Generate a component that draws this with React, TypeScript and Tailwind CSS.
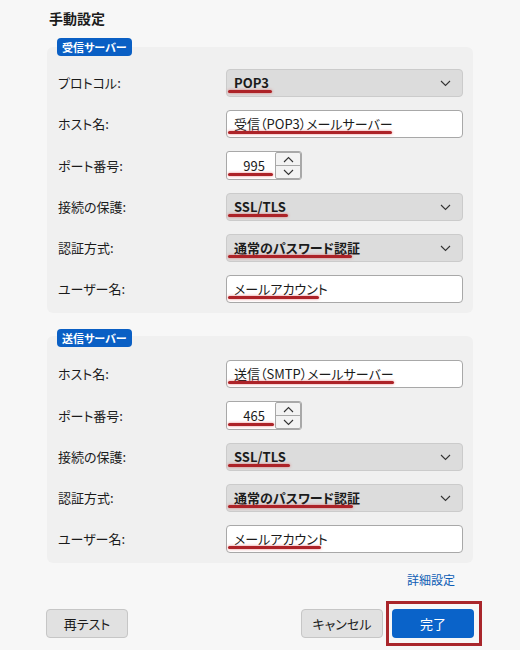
import React from "react";

type Field =
  | { label: string; kind: "select"; value: string; mark: string }
  | { label: string; kind: "input"; value: string; mark: string }
  | { label: string; kind: "spin"; value: string; mark: string };

const incoming: Field[] = [
  { label: "プロトコル:", kind: "select", value: "POP3", mark: "w-[44px]" },
  { label: "ホスト名:", kind: "input", value: "受信（POP3）メールサーバー", mark: "w-[164px]" },
  { label: "ポート番号:", kind: "spin", value: "995", mark: "w-[45px]" },
  { label: "接続の保護:", kind: "select", value: "SSL/TLS", mark: "w-[60px]" },
  { label: "認証方式:", kind: "select", value: "通常のパスワード認証", mark: "w-[124px]" },
  { label: "ユーザー名:", kind: "input", value: "メールアカウント", mark: "w-[91px]" },
];

const outgoing: Field[] = [
  { label: "ホスト名:", kind: "input", value: "送信（SMTP）メールサーバー", mark: "w-[166px]" },
  { label: "ポート番号:", kind: "spin", value: "465", mark: "w-[46px]" },
  { label: "接続の保護:", kind: "select", value: "SSL/TLS", mark: "w-[62px]" },
  { label: "認証方式:", kind: "select", value: "通常のパスワード認証", mark: "w-[125px]" },
  { label: "ユーザー名:", kind: "input", value: "メールアカウント", mark: "w-[93px]" },
];

function Mark({ w }: { w: string }) {
  // red annotation line drawn over the field
  return (
    <span
      className={`absolute left-[1px] bottom-[3px] h-[3px] rounded-full bg-[#ad2328] shadow-[0_0_3px_rgba(220,60,60,0.6)] ${w}`}
    />
  );
}

function Chevron({ up }: { up?: boolean }) {
  return (
    <svg width="11" height="7" viewBox="0 0 11 7" fill="none">
      <path
        d={up ? "M1 6L5.5 1.5L10 6" : "M1 1L5.5 5.5L10 1"}
        stroke="#333"
        strokeWidth="1.1"
      />
    </svg>
  );
}

function Control({ f }: { f: Field }) {
  if (f.kind === "select") {
    return (
      <div className="relative flex h-[28px] w-[237px] items-center justify-between rounded-[4px] border border-[#cbcbcb] bg-[#dcdcdc] pl-[7px] pr-[11px]">
        <span className="text-[13px] font-bold text-[#1b1b1b]">{f.value}</span>
        <Chevron />
        <Mark w={f.mark} />
      </div>
    );
  }
  if (f.kind === "input") {
    return (
      <div className="relative flex h-[28px] w-[237px] items-center rounded-[4px] border border-[#a8a8a8] bg-white pl-[7px]">
        <span className="text-[13px] text-[#1b1b1b]">{f.value}</span>
        <Mark w={f.mark} />
      </div>
    );
  }
  return (
    <div className="relative flex h-[29px] w-[76px] items-center rounded-[3px] border border-[#a8a8a8] bg-white">
      <span className="w-[48px] pr-[10px] text-right text-[13px] text-[#1b1b1b]">{f.value}</span>
      <div className="flex h-[27px] w-[26px] flex-col rounded-[2px] border border-[#a8a8a8] bg-[#f3f3f3]">
        <div className="flex flex-1 items-center justify-center border-b border-[#a8a8a8]">
          <Chevron up />
        </div>
        <div className="flex flex-1 items-center justify-center">
          <Chevron />
        </div>
      </div>
      <Mark w={f.mark} />
    </div>
  );
}

function Section({ title, fields, pt, overlap }: { title: string; fields: Field[]; pt: string; overlap: string }) {
  return (
    <div className="flex flex-col">
      <div className={`relative z-10 ml-[57px] self-start rounded-[4px] bg-[#0a5fc4] px-[5px] text-[11px] font-bold leading-[18px] text-white ${overlap}`}>
        {title}
      </div>
      <div className={`ml-[47px] flex w-[426px] flex-col gap-[13px] rounded-[6px] bg-[#f0f0f0] pb-[10px] pl-[11px] ${pt}`}>
        {fields.map((f, i) => (
          <div key={i} className="flex items-center">
            <span className="w-[168px] text-[13px] text-[#1b1b1b]">{f.label}</span>
            <Control f={f} />
          </div>
        ))}
      </div>
    </div>
  );
}

export default function App() {
  return (
    <div className="h-[650px] w-[520px] overflow-hidden bg-[#f7f7f7] pt-[8px] font-['Noto_Sans_CJK_JP',sans-serif] [font-feature-settings:'palt']">
      <h1 className="pl-[49px] text-[14px] font-bold leading-[20px] text-[#1b1b1b]">手動設定</h1>
      <div className="mt-[10px]">
        <Section title="受信サーバー" fields={incoming} pt="pt-[22px]" overlap="-mb-[9px]" />
      </div>
      <div className="mt-[16px]">
        <Section title="送信サーバー" fields={outgoing} pt="pt-[24px]" overlap="-mb-[11px]" />
      </div>
      <div className="mt-[9px] flex justify-end pr-[65px]">
        <span className="text-[12px] leading-[16px] text-[#0e5db5]">詳細設定</span>
      </div>
      <div className="mt-[21px] flex items-center pl-[46px] pr-[46px]">
        <button className="h-[29px] w-[82px] rounded-[4px] border border-[#c6c6c6] bg-[#e1e1e1] text-[13px] text-[#1b1b1b]">
          再テスト
        </button>
        <div className="flex-1" />
        <button className="h-[29px] w-[82px] rounded-[4px] border border-[#c6c6c6] bg-[#e1e1e1] text-[13px] text-[#1b1b1b]">
          キャンセル
        </button>
        <div className="relative ml-[9px]">
          <button className="h-[29px] w-[82px] rounded-[4px] bg-[#0a63c9] text-[13px] text-white">完了</button>
          <span className="pointer-events-none absolute -bottom-[8px] -left-[6px] -right-[8px] -top-[8px] border-[3px] border-[#a9262b]" />
        </div>
      </div>
    </div>
  );
}
